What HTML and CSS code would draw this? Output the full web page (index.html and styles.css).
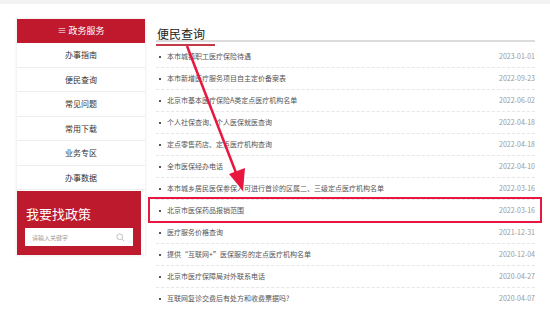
FILE: index.html
```html
<!DOCTYPE html>
<html lang="zh-CN">
<head>
    <meta charset="UTF-8">
    <meta name="viewport" content="width=device-width, initial-scale=1.0">
    <title>便民查询</title>
    <link rel="stylesheet" href="styles.css">
</head>
<body>
    <div class="topbar"></div>
    <div class="wrap">
        <div class="sidebar">
            <div class="side-head">≡ 政务服务</div>
            <ul class="side-menu">
                <li>办事指南</li>
                <li>便民查询</li>
                <li>常见问题</li>
                <li>常用下载</li>
                <li>业务专区</li>
                <li>办事数据</li>
            </ul>
            <div class="policy">
                <h3>我要找政策</h3>
                <div class="search">
                    <span>请输入关键字</span>
                    <svg width="9" height="9" viewBox="0 0 10 10"><circle cx="4.2" cy="4.2" r="3.2" fill="none" stroke="#bbb" stroke-width="1"/><line x1="6.6" y1="6.6" x2="9" y2="9" stroke="#bbb" stroke-width="1"/></svg>
                </div>
            </div>
        </div>
        <div class="main">
            <div class="title-bar"><span class="title">便民查询</span></div>
            <ul class="list">
                <li><span class="txt">本市城镇职工医疗保险待遇</span><span class="date">2023-01-01</span></li>
                <li><span class="txt">本市新增医疗服务项目自主定价备案表</span><span class="date">2022-09-23</span></li>
                <li><span class="txt">北京市基本医疗保险A类定点医疗机构名单</span><span class="date">2022-06-02</span></li>
                <li><span class="txt">个人社保查询、个人医保就医查询</span><span class="date">2022-04-18</span></li>
                <li><span class="txt">定点零售药店、定点医疗机构查询</span><span class="date">2022-04-18</span></li>
                <li><span class="txt">全市医保经办电话</span><span class="date">2022-04-10</span></li>
                <li><span class="txt">本市城乡居民医保参保人可进行首诊的区属二、三级定点医疗机构名单</span><span class="date">2022-03-16</span></li>
                <li class="hl"><span class="txt">北京市医保药品报销范围</span><span class="date">2022-03-16</span></li>
                <li><span class="txt">医疗服务价格查询</span><span class="date">2021-12-31</span></li>
                <li><span class="txt">提供“互联网+”医保服务的定点医疗机构名单</span><span class="date">2020-12-04</span></li>
                <li><span class="txt">北京市医疗保障局对外联系电话</span><span class="date">2020-04-27</span></li>
                <li><span class="txt">互联网复诊交费后有处方和收费票据吗?</span><span class="date">2020-04-07</span></li>
            </ul>
        </div>
    </div>
    <svg class="arrow" width="550" height="309" viewBox="0 0 550 309">
        <line x1="187" y1="46" x2="238" y2="178" stroke="#e8173f" stroke-width="2.5"/>
        <polygon points="243,191 229,174 245,168" fill="#e8173f"/>
    </svg>
</body>
</html>
```

FILE: styles.css
```css
/* mise en page */
body {
    margin: 0;
    background-color: #fff;
    font-family: "Noto Sans CJK SC", "Noto Sans", sans-serif;
    color: #333;
    position: relative;
    height: 309px;
    overflow: hidden;
}
.topbar {
    height: 4px;
    background-color: #f2f2f2;
}
.wrap {
    display: flex;
    align-items: flex-start;
    gap: 11px;
    padding: 15px 15px 0 17px;
}
.sidebar {
    width: 128px;
    background-color: #fff;
    box-shadow: 0 0 3px rgba(0, 0, 0, 0.12);
}
.side-head {
    height: 24px;
    line-height: 24px;
    background-color: #c0182d;
    color: #fff;
    font-size: 9px;
    text-align: center;
}
.side-menu {
    list-style: none;
    margin: 0;
    padding: 0;
}
.side-menu li {
    height: 24.5px;
    line-height: 24px;
    box-sizing: border-box;
    border-bottom: 1px solid #eee;
    font-size: 8px;
    text-align: center;
    color: #333;
}
.policy {
    background-color: #be1a2e;
    margin-top: 1px;
    margin-right: 4px;
    height: 64px;
    padding: 0 8px;
    box-sizing: border-box;
    overflow: hidden;
}
.policy h3 {
    margin: 0;
    padding: 14px 0 0 1px;
    height: 37px;
    box-sizing: border-box;
    font-size: 13px;
    line-height: 18px;
    font-weight: normal;
    color: #fff;
}
.search {
    height: 18px;
    background-color: #fff;
    display: flex;
    align-items: center;
    justify-content: space-between;
    padding: 0 8px 0 7px;
    font-size: 6px;
    color: #999;
}
.search svg {
    display: block;
}
.main {
    flex: 1;
    padding-top: 1px;
}
.title-bar {
    height: 20px;
    border-bottom: 2px solid #dcdcdc;
}
.title {
    display: inline-block;
    width: 58px;
    height: 20px;
    line-height: 20px;
    padding-left: 1px;
    font-size: 12px;
    color: #222;
    border-bottom: 2px solid #c23a4a;
}
.list {
    list-style: none;
    margin: 4px 0 0;
    padding: 0;
}
.list li {
    position: relative;
    display: flex;
    justify-content: space-between;
    height: 22px;
    line-height: 21px;
    box-sizing: border-box;
    border-bottom: 1px dashed #e6e6e6;
    font-size: 7px;
    padding-left: 11px;
}
.list li::before {
    content: "";
    position: absolute;
    left: 3px;
    top: 10px;
    width: 2px;
    height: 2px;
    background-color: #555;
}
.txt {
    color: #555;
}
.date {
    color: #999;
}
/* cadre rouge */
.list li.hl::after {
    content: "";
    position: absolute;
    top: -3px;
    bottom: -2px;
    left: -8px;
    right: -7px;
    border: 2px solid #e8173f;
}
.arrow {
    position: absolute;
    top: 0;
    left: 0;
    pointer-events: none;
}
```
